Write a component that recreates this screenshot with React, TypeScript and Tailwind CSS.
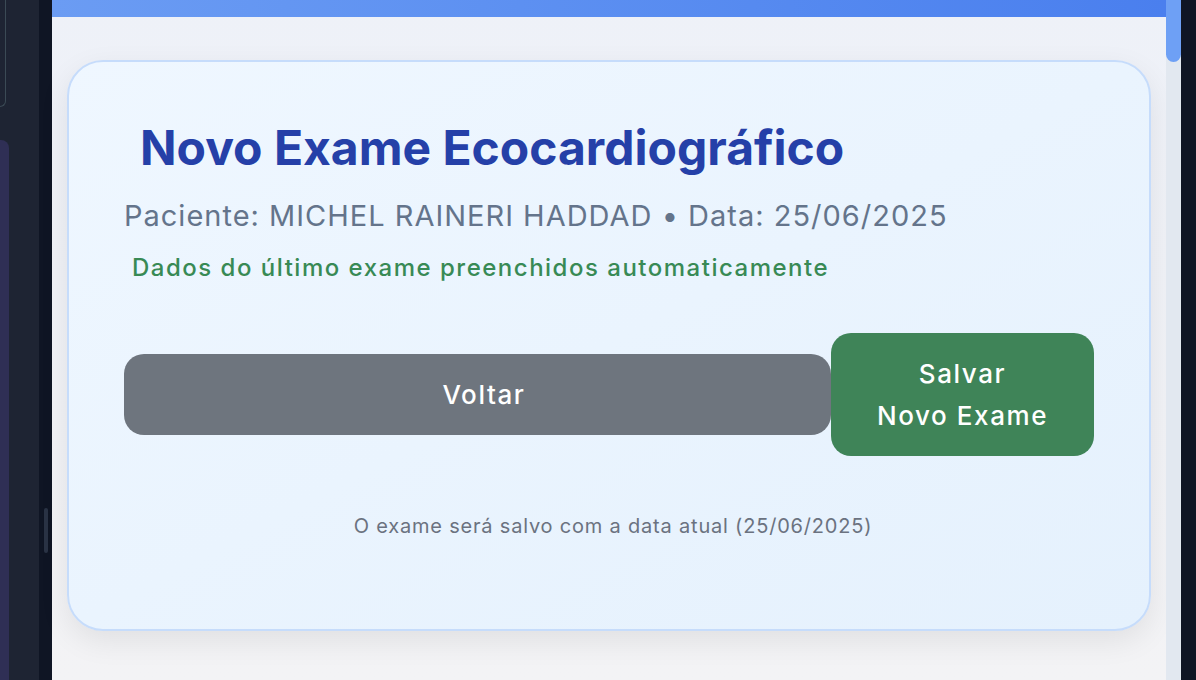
export default function App() {
  return (
    <div className="flex h-[680px] w-[1196px] overflow-hidden bg-[#0f1524] font-['Inter',sans-serif]">
      {/* left app sidebar (mostly off screen) */}
      <div className="flex w-[39px] flex-col bg-[#1e2433]">
        <div className="mt-[-20px] h-[127px] w-[6px] rounded-br-[6px] border-r border-b border-[#3b4a55]" />
        <div className="mt-[33px] w-[9px] flex-1 rounded-tr-[8px] bg-[#2f2f55]" />
      </div>
      <div className="flex w-[13px] flex-col items-center">
        <div className="mt-[508px] h-[45px] w-[4px] rounded-full bg-[#2a3345]" />
      </div>

      {/* main panel */}
      <div className="flex w-[1114px] flex-col bg-gradient-to-b from-[#eef1f8] to-[#f3f3f5]">
        <div className="h-[17px] bg-gradient-to-r from-[#6b9cf3] to-[#4a7fee]" />
        <div className="px-[15px] pt-[43px]">
          <div className="flex h-[571px] flex-col rounded-[36px] border-2 border-[#c6dcfb] bg-gradient-to-br from-[#eff7ff] to-[#e5f1fd] px-[55px] pt-[54px] shadow-[0_10px_30px_rgba(0,0,0,0.08)]">
            <h1 className="pl-[16px] text-[48px] leading-[64px] font-bold text-[#2540a8]">
              Novo Exame Ecocardiográfico
            </h1>
            <p className="mt-[18px] text-[29px] leading-[36px] tracking-[1px] text-[#64748b]">
              Paciente: MICHEL RAINERI HADDAD • Data: 25/06/2025
            </p>
            <p className="mt-[18px] pl-[8px] text-[24px] leading-[32px] font-medium tracking-[1.5px] text-[#388a55]">
              Dados do último exame preenchidos automaticamente
            </p>
            <div className="mt-[49px] flex items-center">
              <button className="h-[81px] flex-1 rounded-[20px] bg-[#6e757e] pl-[13px] text-[26px] font-medium tracking-[1.6px] text-white">
                Voltar
              </button>
              <button className="flex h-[123px] w-[263px] flex-col items-center justify-center rounded-[20px] bg-[#3f8458] text-[26px] leading-[42px] font-medium tracking-[1.6px] text-white">
                <span>Salvar</span>
                <span>Novo Exame</span>
              </button>
            </div>
            <p className="mt-[56px] pl-[8px] text-center text-[20px] leading-[28px] tracking-[0.8px] text-[#6b7280]">
              O exame será salvo com a data atual (25/06/2025)
            </p>
          </div>
        </div>
      </div>

      {/* scrollbar */}
      <div className="w-[15px] bg-[#e2e8f0]">
        <div className="h-[62px] rounded-b-full bg-[#6ea0f5]" />
      </div>
    </div>
  );
}
